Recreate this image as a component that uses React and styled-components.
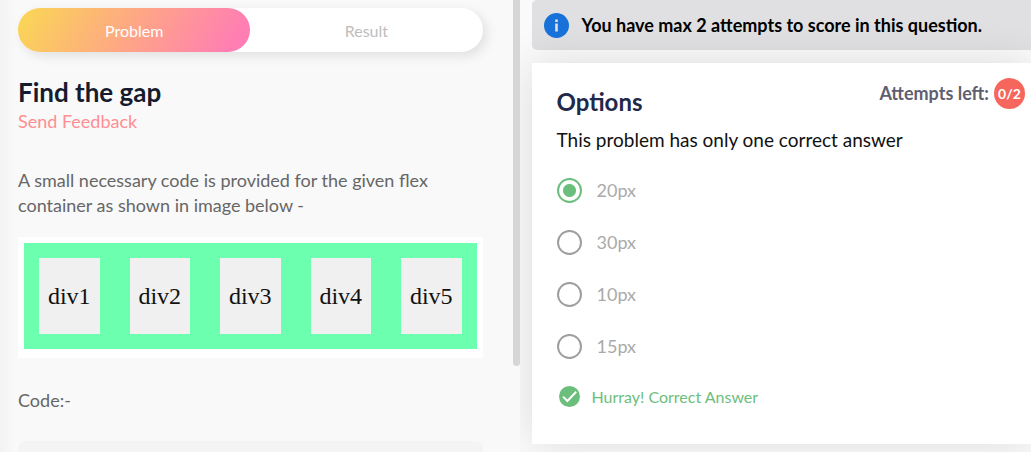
import React, { useState } from "react";
import styled, { createGlobalStyle } from "styled-components";

const GlobalStyle = createGlobalStyle`
  *, *::before, *::after { box-sizing: border-box; }
  body {
    margin: 0;
    background: #fafafa;
    font-family: Lato, "Open Sans", sans-serif;
    font-size: 18px;
    line-height: 25px;
    overflow: hidden;
  }
  h1, h2, p { margin: 0; }
`;

const Page = styled.div`
  display: flex;
  height: 100vh;
`;

const ProblemPane = styled.section`
  display: flex;
  flex: 0 0 auto;
  width: calc(50% + 4px);
  overflow: hidden;
  z-index: 1;
  background: linear-gradient(to right, #f3f3f3, #f9f9f9 16px);
`;

const ProblemContent = styled.div`
  flex: 1;
  min-width: 0;
  padding: 8px 30px 0 18px;
`;

const ScrollThumb = styled.div`
  width: 7px;
  height: 81%;
  border-radius: 0 0 4px 4px;
  background: #d6d6d6;
`;

const Tabs = styled.div`
  display: flex;
  height: 44px;
  border-radius: 22px;
  background: #fff;
  box-shadow: 4px 4px 12px rgba(0, 0, 0, 0.1);
`;

const Tab = styled.button`
  flex: 1;
  padding: 0;
  border: 0;
  border-radius: 22px;
  font: inherit;
  font-size: 16px;
  color: ${(p) => (p.$active ? "#fff" : "#bdbdbd")};
  background: ${(p) =>
    p.$active ? "linear-gradient(120deg, #fad853, #fea587 50%, #ff7eb3 92%)" : "transparent"};
`;

const Title = styled.h1`
  margin-top: 26px;
  font-size: 26px;
  line-height: 28px;
  color: #161c2d;
`;

const FeedbackLink = styled.a`
  display: block;
  margin-top: 3px;
  color: #ff8e93;
  text-decoration: none;
`;

const Statement = styled.p`
  margin-top: ${(p) => p.$top}px;
  color: #666;
`;

const Figure = styled.div`
  margin-top: 19px;
  padding: 6px 6px 9px;
  background: #fff;
`;

const FlexDemo = styled.div`
  display: flex;
  gap: 30px;
  padding: 15px;
  background: #6cffb0;
`;

const DemoBox = styled.div`
  display: flex;
  flex: 1;
  align-items: center;
  justify-content: center;
  height: 76px;
  font-family: "Liberation Serif", serif;
  font-size: 24px;
  color: #111;
  background: #f0f0f0;
`;

const CodeBlock = styled.div`
  height: 160px;
  margin-top: 28px;
  border-radius: 8px;
  background: #f4f4f4;
`;

const AnswerPane = styled.section`
  flex: 1;
  min-width: 0;
  padding-left: 12px;
`;

const Notice = styled.div`
  display: flex;
  align-items: center;
  gap: 13px;
  height: 50px;
  padding: 0 12px;
  border-radius: 5px 0 0 5px;
  font-weight: 700;
  color: #000;
  background: #e0e0e2;
`;

const Card = styled.div`
  margin-top: 13px;
  padding: 14px 6px 35px 25px;
  background: #fff;
  box-shadow: 0 0 40px rgba(0, 0, 0, 0.12);
`;

const CardHeader = styled.div`
  display: flex;
  justify-content: space-between;
`;

const CardTitle = styled.h2`
  padding-top: 11px;
  font-size: 24px;
  line-height: 28px;
  color: #1f2a4b;
`;

const Attempts = styled.div`
  display: flex;
  align-items: center;
  gap: 5px;
  height: 32px;
  font-weight: 700;
  color: #5f5f70;
`;

const Badge = styled.span`
  display: grid;
  place-items: center;
  width: 31px;
  height: 31px;
  border-radius: 50%;
  font-size: 14px;
  color: #fff;
  background: #f7665c;
`;

const Hint = styled.p`
  margin-top: 11px;
  font-size: 19px;
  color: #111;
`;

const Choices = styled.div`
  display: grid;
  gap: 27px;
  margin-top: 26px;
`;

const Choice = styled.label`
  display: flex;
  align-items: center;
  gap: 15px;
  color: #aaa;
`;

const Radio = styled.input`
  appearance: none;
  width: 25px;
  height: 25px;
  margin: 0;
  border: 2px solid #9e9e9e;
  border-radius: 50%;
  &:checked {
    border-color: #6cbe7c;
    background: radial-gradient(circle, #6cbe7c 6px, transparent 7px);
  }
`;

const Verdict = styled.div`
  display: flex;
  align-items: center;
  gap: 12px;
  margin-top: 25px;
  padding-left: 2px;
  font-size: 16px;
  color: #6cbe7c;
`;

const InfoIcon = () => (
  <svg width="25" height="25" viewBox="0 0 25 25" aria-hidden="true">
    <circle cx="12.5" cy="12.5" r="12.5" fill="#1771d8" />
    <path d="M11.2 6.5h2.6v2.4h-2.6zM11.2 10.5h2.6v8h-2.6z" fill="#e0e0e2" />
  </svg>
);

const CheckIcon = () => (
  <svg width="21" height="21" viewBox="0 0 21 21" aria-hidden="true">
    <circle cx="10.5" cy="10.5" r="10.5" fill="#6cbe7c" />
    <path d="M4 10.6l4.4 4.4 8.8-9.2" fill="none" stroke="#fff" strokeWidth="2" />
  </svg>
);

const choices = ["20px", "30px", "10px", "15px"];
const boxes = ["div1", "div2", "div3", "div4", "div5"];

export default function App() {
  const [selected, setSelected] = useState("20px");
  return (
    <>
      <GlobalStyle />
      <Page>
        <ProblemPane>
          <ProblemContent>
            <Tabs role="tablist">
              <Tab type="button" role="tab" aria-selected="true" $active>Problem</Tab>
              <Tab type="button" role="tab" aria-selected="false">Result</Tab>
            </Tabs>
            <Title>Find the gap</Title>
            <FeedbackLink href="#feedback">Send Feedback</FeedbackLink>
            <Statement $top={34}>
              A small necessary code is provided for the given flex container as shown in image below -
            </Statement>
            <Figure>
              <FlexDemo>
                {boxes.map((box) => <DemoBox key={box}>{box}</DemoBox>)}
              </FlexDemo>
            </Figure>
            <Statement $top={30}>Code:-</Statement>
            <CodeBlock />
          </ProblemContent>
          <ScrollThumb />
        </ProblemPane>
        <AnswerPane>
          <Notice>
            <InfoIcon />
            You have max 2 attempts to score in this question.
          </Notice>
          <Card>
            <CardHeader>
              <CardTitle>Options</CardTitle>
              <Attempts>Attempts left: <Badge>0/2</Badge></Attempts>
            </CardHeader>
            <Hint>This problem has only one correct answer</Hint>
            <Choices role="radiogroup" aria-label="Options">
              {choices.map((value) => (
                <Choice key={value}>
                  <Radio
                    type="radio"
                    name="answer"
                    value={value}
                    checked={selected === value}
                    onChange={() => setSelected(value)}
                  />
                  {value}
                </Choice>
              ))}
            </Choices>
            <Verdict>
              <CheckIcon />
              Hurray! Correct Answer
            </Verdict>
          </Card>
        </AnswerPane>
      </Page>
    </>
  );
}
